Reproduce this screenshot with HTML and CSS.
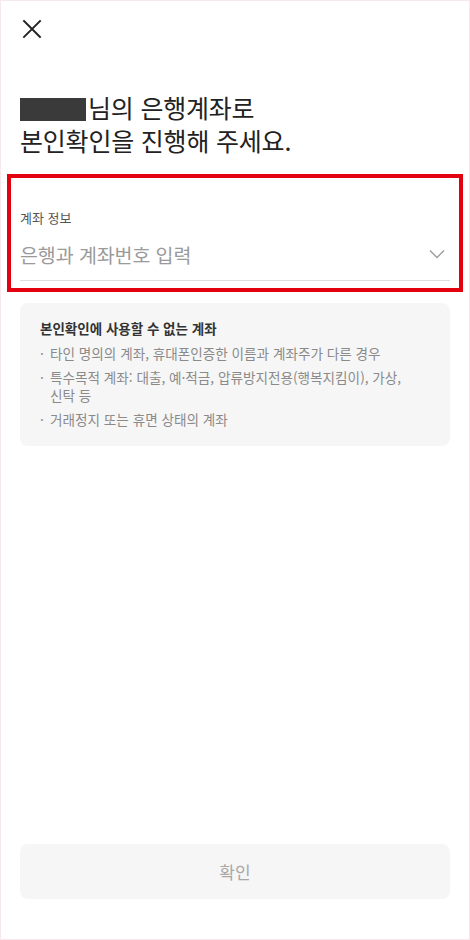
FILE: index.html
```html
<!DOCTYPE html>
<html lang="ko">
<head>
<meta charset="utf-8">
<title>본인확인</title>
<link rel="stylesheet" href="styles.css">
</head>
<body>
<div class="page">
  <header class="topbar">
    <button class="close" aria-label="닫기">
      <svg width="20" height="20" viewBox="0 0 20 20"><path d="M2 2 L18 18 M18 2 L2 18" stroke="#222" stroke-width="1.9" fill="none" stroke-linecap="square"/></svg>
    </button>
  </header>

  <h1 class="title"><span class="redact"></span>님의 은행계좌로<br>본인확인을 진행해 주세요.</h1>

  <div class="highlight">
    <div class="field">
      <div class="field-label">계좌 정보</div>
      <div class="field-row">
        <span class="placeholder">은행과 계좌번호 입력</span>
        <svg class="chevron" width="16" height="10" viewBox="0 0 16 10"><path d="M1 1.5 L8 8.5 L15 1.5" stroke="#9a9a9a" stroke-width="1.3" fill="none"/></svg>
      </div>
    </div>
  </div>

  <section class="notice">
    <h2 class="notice-title">본인확인에 사용할 수 없는 계좌</h2>
    <ul class="notice-list">
      <li>타인 명의의 계좌, 휴대폰인증한 이름과 계좌주가 다른 경우</li>
      <li>특수목적 계좌: 대출, 예·적금, 압류방지전용(행복지킴이), 가상, 신탁 등</li>
      <li>거래정지 또는 휴면 상태의 계좌</li>
    </ul>
  </section>

  <div class="spacer"></div>

  <div class="footer">
    <button class="confirm">확인</button>
  </div>
</div>
</body>
</html>
```

FILE: styles.css
```css
html, body {
  margin: 0;
  padding: 0;
  background: #fff;
}

body {
  font-family: "Noto Sans CJK KR", "Noto Sans", sans-serif;
  color: #222;
}

.page {
  width: 470px;
  height: 940px;
  box-sizing: border-box;
  border: 1px solid #f7e8ee;
  display: flex;
  flex-direction: column;
}

.topbar {
  height: 57px;
  padding: 18px 0 0 21px;
  box-sizing: border-box;
}

.close {
  border: 0;
  background: none;
  padding: 0;
  width: 20px;
  height: 20px;
  display: block;
}

.close svg {
  display: block;
}

.title {
  margin: 33px 0 0 19px;
  font-size: 25px;
  font-weight: 400;
  line-height: 33px;
  letter-spacing: -0.2px;
  color: #222;
}

.redact {
  display: inline-block;
  width: 66px;
  height: 23px;
  background: #3a3a3a;
  vertical-align: -3px;
  margin-right: 2px;
}

.highlight {
  margin: 17px 6px 0 6px;
  border: 4px solid #e3000f;
  padding: 31px 9px 7px 9px;
}

.field-label {
  font-size: 13px;
  line-height: 18px;
  color: #555;
}

.field-row {
  margin-top: 13px;
  display: flex;
  align-items: center;
  justify-content: space-between;
  height: 28px;
  padding-bottom: 12px;
  border-bottom: 1px solid #dedede;
}

.placeholder {
  font-size: 19.5px;
  color: #9a9a9a;
  letter-spacing: -0.1px;
}

.chevron {
  margin-right: 5px;
}

.notice {
  margin: 11px 19px 0 19px;
  background: #f6f6f6;
  border-radius: 8px;
  padding: 16px 32px 18px 20px;
}

.notice-title {
  margin: 0;
  font-size: 13.5px;
  line-height: 18px;
  font-weight: 700;
  color: #333;
}

.notice-list {
  list-style: none;
  margin: 7px 0 0 0;
  padding: 0;
}

.notice-list li {
  position: relative;
  padding-left: 10px;
  font-size: 13.6px;
  line-height: 18px;
  color: #8a8a8a;
  margin-top: 6px;
  word-break: keep-all;
}

.notice-list li:first-child {
  margin-top: 0;
}

.notice-list li::before {
  content: "·";
  position: absolute;
  left: 0;
  top: 0;
  color: #8a8a8a;
}

.spacer {
  flex: 1;
}

.footer {
  padding: 0 19px 40px 19px;
}

.confirm {
  width: 100%;
  height: 55px;
  border: 0;
  border-radius: 8px;
  background: #f6f6f6;
  color: #a8a8a8;
  font-family: "Noto Sans CJK KR", "Noto Sans", sans-serif;
  font-size: 17px;
  display: block;
}
```
